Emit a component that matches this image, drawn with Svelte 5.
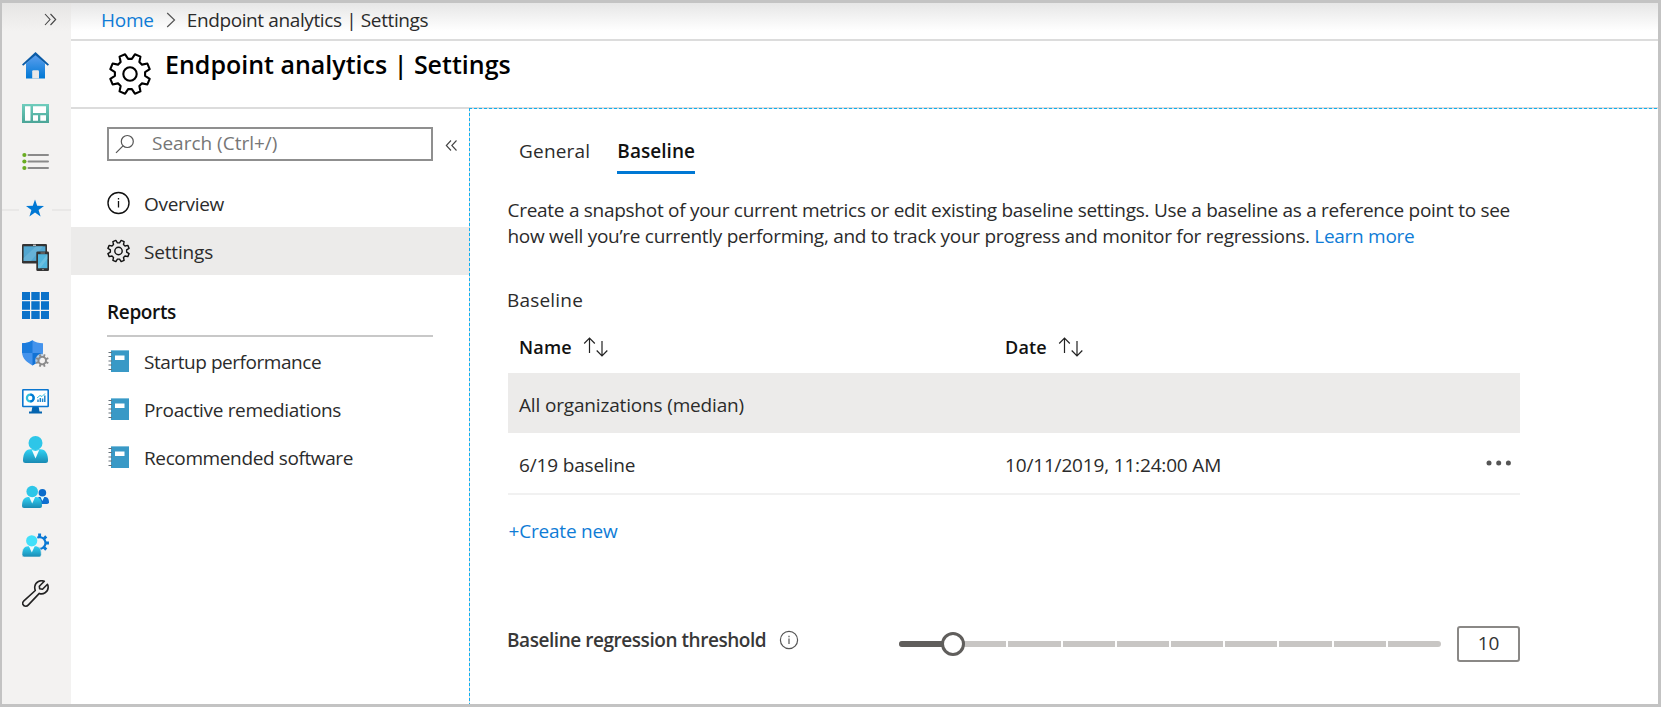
<script>
  function gear(cx, cy, R, r, tip, base) {
    const pts = [];
    const at = (rad, deg) => {
      const a = ((deg - 90) * Math.PI) / 180;
      pts.push(`${(cx + rad * Math.cos(a)).toFixed(2)} ${(cy + rad * Math.sin(a)).toFixed(2)}`);
    };
    for (let i = 0; i < 8; i++) {
      const mid = 22.5 + i * 45;
      at(r, mid - base);
      at(R, mid - tip);
      at(R, mid + tip);
      at(r, mid + base);
    }
    return 'M' + pts.join('L') + 'Z';
  }

  const rail = ['home', 'dashboard', 'list', 'star', 'devices', 'apps', 'security', 'reports', 'user', 'groups', 'admin', 'support'];
  const menu = [
    { id: 'info', label: 'Overview', ls: -0.3 },
    { id: 'gear', label: 'Settings', ls: -0.18, active: true }
  ];
  const reports = [
    { label: 'Startup performance', ls: -0.45 },
    { label: 'Proactive remediations', ls: -0.33 },
    { label: 'Recommended software', ls: -0.38 }
  ];
  const threshold = 10;
  const ticks = [20, 30, 40, 50, 60, 70, 80, 90];
</script>

{#snippet sort()}
  <svg class="sort" width="26" height="20" viewBox="0 0 26 20" fill="none" stroke="#222" stroke-width="1.2">
    <path d="M6.5 16V1.2M1.2 6.5L6.5 1.2L11.8 6.5M19 4V18.8M13.7 13.5L19 18.8L24.3 13.5" />
  </svg>
{/snippet}

<div class="frame">
  <nav class="rail">
    <div class="expand">
      <svg width="13" height="13" viewBox="0 0 13 13" fill="none" stroke="#444" stroke-width="1.1"><path d="M1 1L6 6.5L1 12M6.5 1L11.7 6.5L6.5 12" /></svg>
    </div>
    {#each rail as id}
      <div class="cell" class:divided={id === 'star'}>
        <svg width="27" height="27" viewBox="0 0 27 27">
          {#if id === 'home'}
            <defs><linearGradient id="gh" x1="0" y1="0" x2="0" y2="1"><stop offset="0" stop-color="#5ea0ef" /><stop offset="1" stop-color="#0078d4" /></linearGradient></defs>
            <path d="M13.5 2.5L23 11.5V26.5H4V11.5Z" fill="url(#gh)" />
            <path d="M13.5 0L27 12.4L25.8 13.8L13.5 3.2L1.2 13.8L0 12.4Z" fill="#0a5ba6" />
            <path d="M10.2 26.5V19.5Q10.2 18.3 11.4 18.3H15.8Q17 18.3 17 19.5V26.5Z" fill="#e8e8e8" />
          {:else if id === 'dashboard'}
            <defs><linearGradient id="gd" x1="0" y1="0" x2="0" y2="1"><stop offset="0" stop-color="#6fcdbd" /><stop offset="1" stop-color="#4aa597" /></linearGradient></defs>
            <rect x="0" y="4" width="27" height="19" fill="url(#gd)" />
            <path d="M3 6.3H8.5V20.8H3ZM11 6.3H24V13H11ZM11 15.3H16V20.8H11ZM18.3 15.3H24V20.8H18.3Z" fill="#fff" />
          {:else if id === 'list'}
            <path d="M6.5 7H26M6.5 13.5H26M6.5 20H26" stroke="#8a8a8a" stroke-width="2" stroke-linecap="round" />
            <g fill="#69ac22"><circle cx="2.4" cy="7" r="2.1" /><circle cx="2.4" cy="13.5" r="2.1" /><circle cx="2.4" cy="20" r="2.1" /></g>
          {:else if id === 'star'}
            <path d="M13 3.500L15.2 9.800L22 9.900L16.6 14L18.6 20.500L13 16.600L7.4 20.500L9.4 14L4 9.900L10.8 9.800Z" fill="#0078d4" />
          {:else if id === 'devices'}
            <rect x="0" y="0" width="25" height="19.5" rx="1.3" fill="#343434" />
            <rect x="1.6" y="2.3" width="21.8" height="14.6" fill="#52a7d1" />
            <path d="M14 2.3H21L9 16.9H1.6V14Z" fill="#75b9da" opacity=".6" />
            <path d="M11 1.2H14" stroke="#eee" />
            <rect x="14.3" y="7.6" width="12.7" height="19.4" rx="1.2" fill="#343434" />
            <rect x="16" y="10.2" width="9.4" height="14" fill="#50b5dd" />
            <path d="M25.4 10.2V15L18 24.2H16V22Z" fill="#7dc6e2" opacity=".6" />
            <path d="M18.5 9H23M20 25.6H22" stroke="#999" stroke-width=".8" />
          {:else if id === 'apps'}
            <path d="M0 0H8V8H0ZM9.3 0H17.7V8H9.3ZM19 0H27V8H19ZM0 9.3H8V17.7H0ZM9.3 9.3H17.7V17.7H9.3ZM19 9.3H27V17.7H19ZM0 19H8V27H0ZM9.3 19H17.7V27H9.3ZM19 19H27V27H19Z" fill="#0b72c9" />
          {:else if id === 'security'}
            <path d="M10.5 0.3Q14.5 3.2 21 3.3V12C21 18.5 15.5 22.8 10.5 25.4C5.5 22.8 0 18.5 0 12V3.3Q6.5 3.2 10.5 .3Z" fill="#4493ec" />
            <path d="M10.5 13H21C20.6 19 15.5 22.8 10.5 25.4Z" fill="#1272d4" />
            <path d="M10.5 .3V13H0V3.3Q6.5 3.2 10.5 .3Z" fill="#1b7bdc" />
            <circle cx="20.2" cy="20.6" r="7" fill="#f3f2f1" opacity=".7" />
            <path d={gear(20.2, 20.6, 6.7, 4.8, 8, 11) + 'M23 20.6A2.8 2.8 0 1 0 17.4 20.6A2.8 2.8 0 1 0 23 20.6Z'} fill="#8b8b8b" fill-rule="evenodd" />
          {:else if id === 'reports'}
            <path d="M10.5 18H16.5L17.5 23.5H20V25.5H7V23.5H9.5Z" fill="#0465b0" />
            <rect x=".8" y="1.8" width="25.4" height="16.7" rx=".5" fill="#fff" stroke="#0a76cf" stroke-width="1.6" />
            <circle cx="8.3" cy="10" r="3.4" fill="none" stroke="#32bedd" stroke-width="2.2" />
            <path d="M8.3 6.6A3.4 3.4 0 0 1 8.3 13.4" fill="none" stroke="#0078d4" stroke-width="2.2" />
            <path d="M16 14V11.5M18.3 14V10M20.6 14V10.5M22.8 14V7.5" stroke="#2088ce" stroke-width="1.5" />
            <path d="M15 10L18 7.5L20 8.5L23 5.5" fill="none" stroke="#32bedd" stroke-width="1" />
          {:else if id === 'user'}
            <defs><linearGradient id="gu" x1="0" y1="0" x2="0" y2="1"><stop offset="0" stop-color="#32d4f5" /><stop offset="1" stop-color="#198ab3" /></linearGradient></defs>
            <path d="M1 24.5C1 18 3.5 13.3 8.5 13.3H18.5C23.5 13.3 26 18 26 24.5Q26 27 23.5 27H3.5Q1 27 1 24.5Z" fill="url(#gu)" />
            <path d="M9.8 14L13.5 15L17.200 14L13.5 22.5Z" fill="#f3fbfd" />
            <circle cx="13.5" cy="7" r="7" fill="#2dc6e8" />
          {:else if id === 'groups'}
            <g transform="translate(0 1)">
              <path d="M14 18C14 13.5 16 12 18 12H23.500C26 12 27 15 27 17.200Q27 19 25 19H14Z" fill="#0f6fd0" />
              <path d="M18.3 11.5H22.5L20.4 16Z" fill="#dff" />
              <circle cx="20.4" cy="7.800" r="3.8" fill="#0a6bcb" />
              <path d="M0 21C0 15.5 2 12 6 12H14C18 12 20 15.5 20 21Q20 23 18 23H2Q0 23 0 21Z" fill="url(#gu)" />
              <path d="M7.2 12H13.2L10.2 18.5Z" fill="#f3fbfd" />
              <circle cx="10.2" cy="6.500" r="5.8" fill="#2dc6e8" />
            </g>
          {:else if id === 'admin'}
            <path d={gear(17.6, 11, 9.5, 7, 9, 12) + 'M22.400 11A4.8 4.8 0 1 0 12.8 11A4.8 4.8 0 1 0 22.400 11Z'} fill="#0a78d4" fill-rule="evenodd" transform="rotate(22.5 17.6 11)" />
            <circle cx="9.7" cy="8.800" r="6.500" fill="#f3f2f1" />
            <path d="M0 22.5C0 17.5 2 14 6 14H13.5C17.5 14 19.3 17.5 19.3 22.5Q19.3 25 17.3 25H2Q0 25 0 22.5Z" fill="url(#gu)" stroke="#f3f2f1" stroke-width=".6" />
            <path d="M6.8 14H12.8L9.8 20.5Z" fill="#f3fbfd" />
            <circle cx="9.7" cy="8.8" r="5.6" fill="#42e0fa" />
          {:else}
            <path d="M22.3 1.3C18.5 -.3 13.5 1.8 12.8 6.5C12.6 8 12.8 9.3 13.3 10.5L1.6 21.2C-.2 23 .8 26.2 3.8 26.2C4.9 26.2 5.7 25.7 6.4 24.9L17.3 13.4C21 14.9 26 12.2 26.2 7.4C26.2 6.2 26 5.2 25.5 4.3L20.5 9.3L17.7 8.8L17.3 6.2Z" fill="none" stroke="#222" stroke-width="1.6" stroke-linejoin="round" />
          {/if}
        </svg>
      </div>
    {/each}
  </nav>

  <div class="page">
    <div class="crumbs">
      <a class="home" href="#home">Home</a>
      <svg width="10" height="16" viewBox="0 0 10 16" fill="none" stroke="#555" stroke-width="1.2"><path d="M1.2 1L8.5 8L1.2 15" /></svg>
      <span class="here">Endpoint analytics | Settings</span>
    </div>

    <header>
      <svg width="44" height="44" viewBox="0 0 44 44" fill="none" stroke="#000" stroke-width="2.1">
        <path d={gear(22, 22, 20.3, 15.2, 8.5, 15.5)} stroke-linejoin="round" /><circle cx="22" cy="22" r="6.7" />
      </svg>
      <h1>Endpoint analytics | Settings</h1>
    </header>

    <div class="body">
      <aside>
        <div class="searchrow">
          <div class="search">
            <svg width="20" height="20" viewBox="0 0 20 20" fill="none" stroke="#555" stroke-width="1.2"><circle cx="12.3" cy="7.5" r="6" /><path d="M8 11.8L1 18.8" /></svg>
            <span>Search (Ctrl+/)</span>
          </div>
          <svg class="collapse" width="13" height="13" viewBox="0 0 13 13" fill="none" stroke="#444" stroke-width="1.1"><path d="M6 1.5L1.3 6.5L6 11.5M11.5 1.5L6.8 6.5L11.5 11.5" /></svg>
        </div>

        <div class="menu">
          {#each menu as item}
            <div class="item" class:active={item.active}>
              <svg width="24" height="24" viewBox="0 0 24 24" fill="none" stroke="#111" stroke-width="1.4">
                {#if item.id === 'info'}
                  <circle cx="11.5" cy="12" r="10.5" /><path d="M11.500 10V16.5M11.500 7V8.6" stroke-width="1.3" />
                {:else}
                  <path d={gear(11.5, 12, 10.9, 8.2, 8.5, 15)} stroke-linejoin="round" /><circle cx="11.5" cy="12" r="3.7" />
                {/if}
              </svg>
              <span style="letter-spacing: {item.ls}px">{item.label}</span>
            </div>
          {/each}
        </div>

        <h2>Reports</h2>
        <div class="menu">
          {#each reports as item}
            <div class="item">
              <svg width="24" height="24" viewBox="0 0 24 24">
                <rect x="4" y="1" width="18" height="22" fill="#3999c6" />
                <path d="M4 1.5H22" stroke="#7fbfdc" />
                <rect x="8" y="6.5" width="9.5" height="4.5" fill="#fff" />
                <path d="M1.5 3.5H5M1.5 7.5H5M1.5 12H5M1.5 16H5M1.5 20.5H5" stroke="#68727a" stroke-width="1.2" />
              </svg>
              <span style="letter-spacing: {item.ls}px">{item.label}</span>
            </div>
          {/each}
        </div>
      </aside>

      <main>
        <div class="tabs">
          <span class="tab">General</span>
          <span class="tab on">Baseline</span>
        </div>
        <p>Create a snapshot of your current metrics or edit existing baseline settings. Use a baseline as a reference point to see<br />how well you’re currently performing, and to track your progress and monitor for regressions. <a href="#learn">Learn more</a></p>

        <h3>Baseline</h3>
        <div class="row head">
          <span>Name{@render sort()}</span>
          <span>Date{@render sort()}</span>
        </div>
        <div class="row shaded"><span>All organizations (median)</span></div>
        <div class="row lined">
          <span>6/19 baseline</span>
          <span>10/11/2019, 11:24:00 AM</span>
          <svg width="26" height="6" viewBox="0 0 26 6" fill="#555"><circle cx="3" cy="3" r="2.5" /><circle cx="12.7" cy="3" r="2.5" /><circle cx="22.4" cy="3" r="2.5" /></svg>
        </div>
        <a class="create" href="#create">+Create new</a>

        <div class="threshold">
          <div class="label">
            <span>Baseline regression threshold</span>
            <svg width="20" height="20" viewBox="0 0 20 20" fill="none" stroke="#555" stroke-width="1.2"><circle cx="10" cy="10" r="8.6" /><path d="M10 8.5V14M10 5.8V7.2" /></svg>
          </div>
          <div class="slider">
            <div class="fill" style="width: {threshold}%"></div>
            {#each ticks as t}<i style="left: {t}%"></i>{/each}
            <b style="left: {threshold}%"></b>
          </div>
          <div class="value">{threshold}</div>
        </div>
      </main>
    </div>
  </div>
</div>

<style>
  :global(body) { margin: 0; background: #fff; }
  * { box-sizing: border-box; }
  svg { display: block; flex: none; }
  a { color: #0f7cd6; text-decoration: none; }
  .frame {
    display: grid; grid-template-columns: 69px 1fr; width: 1661px; height: 707px; overflow: hidden;
    border: solid #c3c3c3; border-width: 3px 3px 3px 2px;
    font-family: "Open Sans", "Noto Sans", sans-serif; font-size: 19px; color: #2b2b2b; background: #fff;
  }
  .rail { background: linear-gradient(#e6e5e4, #f3f2f1 28px); padding-left: 20px; }
  .expand { height: 38.5px; padding: 10px 0 0 22px; }
  .cell { height: 48px; display: flex; align-items: center; margin-left: -20px; padding-left: 20px; }
  .cell.divided {
    background: linear-gradient(#e9e8e7, #e9e8e7) 0 23px / 17px 2px no-repeat, linear-gradient(#e9e8e7, #e9e8e7) 100% 23px / 19px 2px no-repeat;
  }
  .page { display: flex; flex-direction: column; min-width: 0; }
  .crumbs {
    height: 38px; display: flex; align-items: center; padding: 0 0 2px 30px;
    background: linear-gradient(#e6e6e6, #fff 28px); border-bottom: 2px solid #dcdcdc;
  }
  .crumbs svg { margin: 0 11px 0 12px; }
  .home { letter-spacing: -.25px; }
  .here { letter-spacing: -.383px; }
  header {
    height: 68px; display: flex; align-items: flex-start; padding: 11px 0 0 37px; border-bottom: 2px solid #dcdcdc;
  }
  h1 { margin: -5px 0 0 13px; font-size: 25px; line-height: 34px; font-weight: 600; color: #000; letter-spacing: 0; }
  .body { flex: 1; display: grid; grid-template-columns: 398px 1fr; }
  .searchrow { display: flex; align-items: center; padding: 18px 0 18px 36px; }
  .search {
    width: 326px; height: 34px; border: 2px solid #8f8f8f; display: flex; align-items: center; padding-left: 6px; color: #767676;
  }
  .search span { margin: -3px 0 0 17px; }
  .collapse { margin: 3px 0 0 12px; }
  .item { height: 48px; display: flex; align-items: center; padding-left: 36px; }
  .item span { margin: 1px 0 0 13px; }
  .item.active { background: #ecebea; }
  h2 {
    margin: 20px 36px 0; height: 42px; line-height: 35px; border-bottom: 2px solid #c8c8c8;
    font-size: 19px; font-weight: 600; color: #111; letter-spacing: -.35px;
  }
  main {
    margin-top: -1px; padding: 29px 0 0 39px;
    background:
      repeating-linear-gradient(90deg, #10b0f0 0 3px, #dcdcdc 3px 5px) 0 0 / 100% 1px no-repeat,
      repeating-linear-gradient(#10b0f0 0 3px, #dcdcdc 3px 5px) 0 0 / 1px 100% no-repeat;
  }
  .tabs { display: flex; gap: 27px; padding-left: 11px; }
  .tab { line-height: 29px; padding-bottom: 5px; border-bottom: 3px solid transparent; letter-spacing: .2px; }
  .on { font-weight: 600; color: #111; border-color: #0078d4; letter-spacing: .05px; }
  p { margin: 23px 0 0 -.5px; line-height: 26px; letter-spacing: -.28px; white-space: nowrap; }
  h3 { margin: 37px 0 0 -1px; font-size: 19px; font-weight: 400; line-height: 29px; padding-bottom: 1px; letter-spacing: .2px; }
  .row {
    width: 1012px; height: 60px; display: grid; grid-template-columns: 486px 1fr auto; align-items: center;
    padding: 3px 8px 0 11px; letter-spacing: -.165px;
  }
  .row span { display: flex; align-items: center; }
  .row svg { margin-top: -3px; }
  .row .sort { margin: 0 0 0 11px; }
  .head { height: 57px; padding-top: 5px; font-size: 18px; font-weight: 600; color: #111; letter-spacing: .2px; }
  .shaded { background: #ecebea; }
  .lined { height: 62px; border-bottom: 2px solid #f1f1f1; }
  .create { display: block; margin: 21px 0 0 .5px; line-height: 30px; letter-spacing: -.2px; }
  .threshold { margin-top: 80px; height: 36px; display: grid; grid-template-columns: 391px 542px 63px; align-items: center; }
  .value {
    margin-left: 16px; width: 63px; height: 36px; border: 2px solid #8a8886; border-radius: 3px;
    text-align: center; line-height: 31px; letter-spacing: -.2px; color: #333;
  }
  .label { display: flex; align-items: center; padding-bottom: 9px; margin-left: -1px; font-weight: 600; color: #383838; letter-spacing: -.45px; }
  .label svg { margin-left: 13px; }
  .slider { position: relative; height: 6px; border-radius: 3px; background: #c8c6c4; }
  .fill { height: 6px; border-radius: 3px 0 0 3px; background: #605e5c; }
  .slider i { position: absolute; top: 0; width: 2px; height: 6px; margin-left: -1px; background: #fff; }
  .slider b {
    position: absolute; top: -9px; width: 24px; height: 24px; margin-left: -12px; border: 3px solid #605e5c; border-radius: 50%; background: #fff;
  }
</style>
